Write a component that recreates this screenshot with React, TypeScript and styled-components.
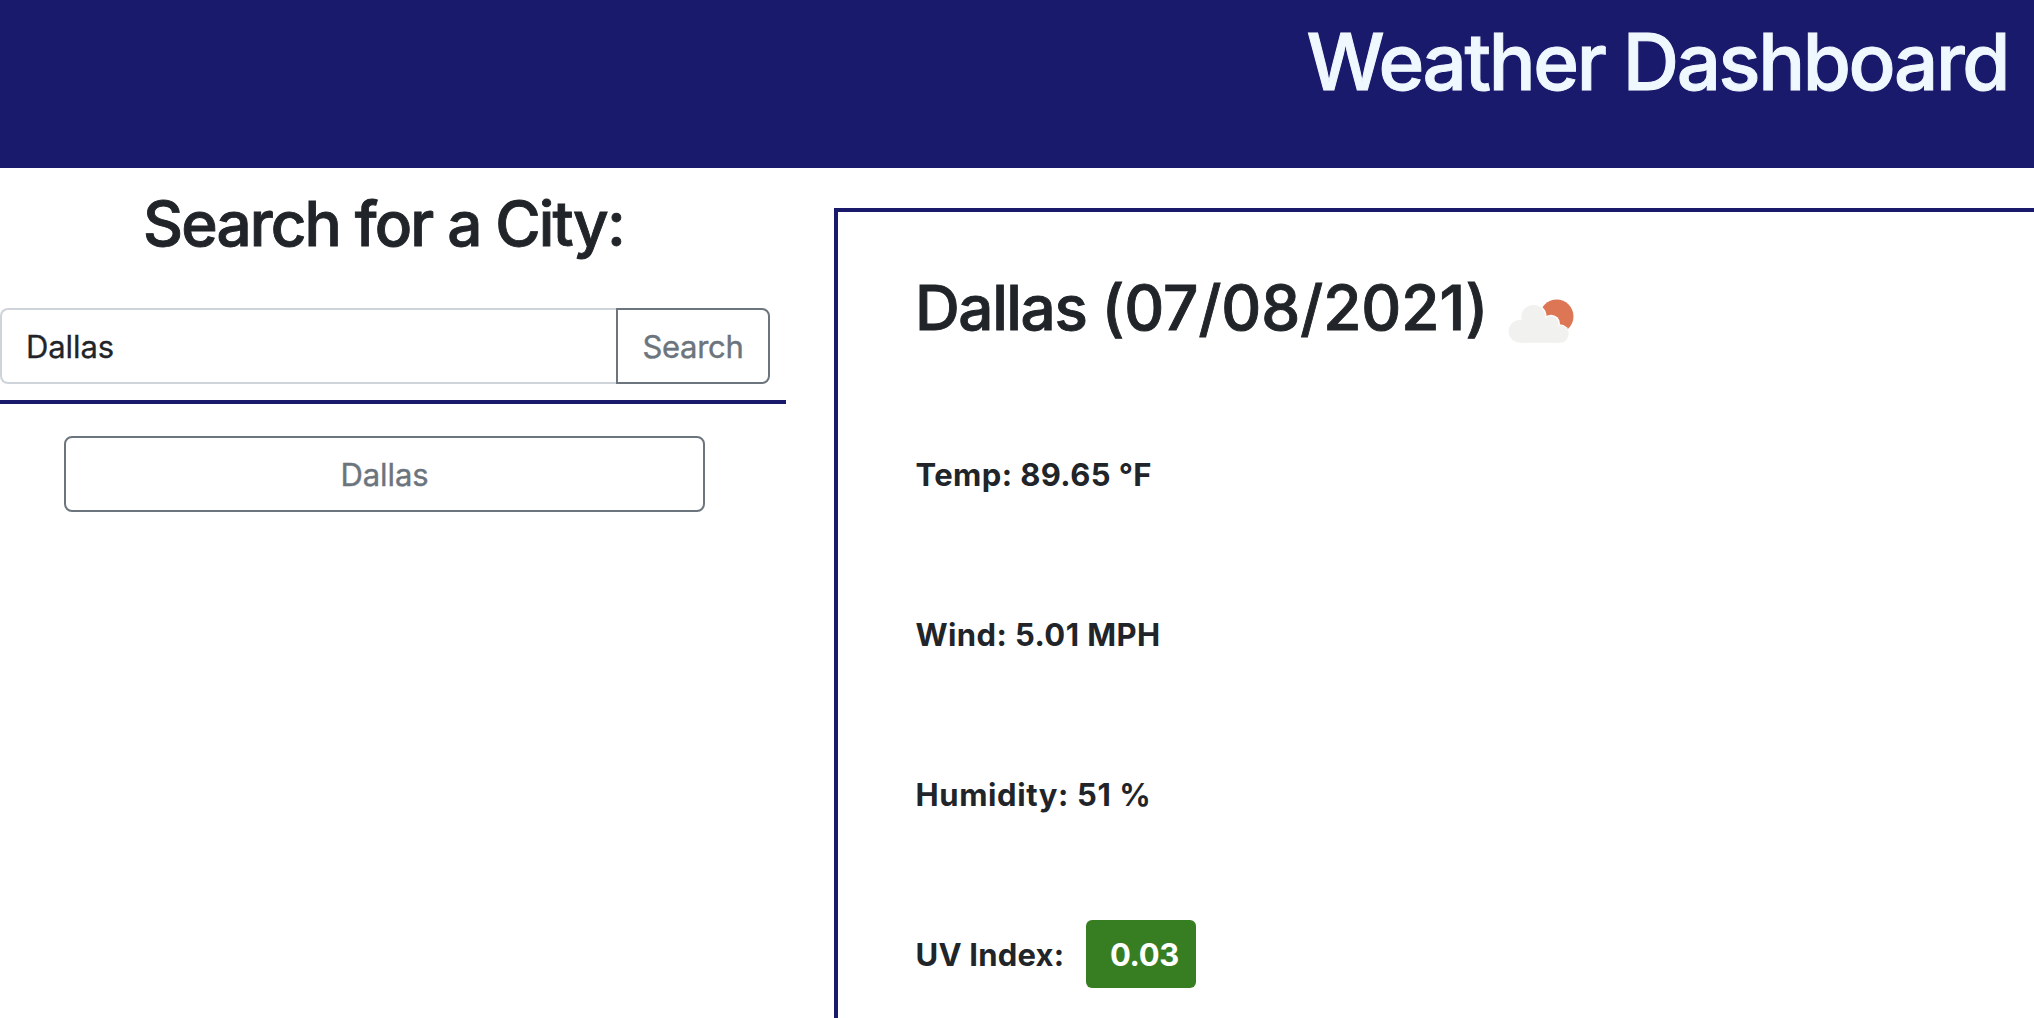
import React, { useState } from "react";
import styled, { createGlobalStyle } from "styled-components";

const navy = "#191a6b";
const ink = "#212529";
const muted = "#6c757d";

const GlobalStyle = createGlobalStyle`
  *, *::before, *::after { box-sizing: border-box; }
  html, body { margin: 0; height: 100%; overflow: hidden; background: #fff; }
  body {
    font-family: Inter, "Liberation Sans", sans-serif;
    font-size: 31px;
    line-height: 48px;
    color: ${ink};
  }
`;

const Page = styled.div`
  display: flex;
  flex-direction: column;
  height: 1018px;
  overflow: hidden;
`;

const Header = styled.header`
  flex: none;
  display: flex;
  justify-content: flex-end;
  height: 168px;
  padding: 14px 26px 0 0;
  background: ${navy};
`;

const Title = styled.h1<{ $spacing: number }>`
  margin: 0;
  font-size: 78px;
  font-weight: 500;
  line-height: 96px;
  letter-spacing: ${(p) => p.$spacing}px;
  -webkit-text-stroke: 1px aliceblue;
  color: aliceblue;
`;

const Main = styled.main`
  flex: 1;
  display: flex;
  align-items: stretch;
  gap: 48px;
  min-height: 0;
`;

const Sidebar = styled.aside`
  flex: none;
  width: 786px;
  padding-top: 17px;
`;

const Heading = styled.h2<{ $spacing: number }>`
  margin: 0;
  font-size: 62px;
  font-weight: 500;
  line-height: 77px;
  letter-spacing: ${(p) => p.$spacing}px;
  -webkit-text-stroke: 0.9px ${ink};
  white-space: nowrap;
`;

const SearchTitle = styled(Heading)`
  padding-left: 143px;
`;

const SearchForm = styled.form`
  display: flex;
  width: 770px;
  height: 76px;
  margin-top: 46px;
`;

const CityInput = styled.input`
  flex: 1;
  min-width: 0;
  padding: 1px 24px 0;
  border: 2px solid #ced4da;
  border-right: 0;
  border-radius: 8px 0 0 8px;
  background: #fff;
  color: ${ink};
  font: inherit;
  letter-spacing: -0.1px;
  -webkit-text-stroke: 0.3px ${ink};
  outline: none;
`;

const OutlineButton = styled.button`
  padding: 1px 0 0;
  border: 2px solid ${muted};
  border-radius: 8px;
  background: #fff;
  color: ${muted};
  font: inherit;
  letter-spacing: -0.3px;
  -webkit-text-stroke: 0.4px ${muted};
`;

const SearchButton = styled(OutlineButton)`
  width: 154px;
  border-radius: 0 8px 8px 0;
`;

const HistoryList = styled.div`
  display: flex;
  flex-direction: column;
  margin-top: 16px;
  padding: 32px 81px 0 64px;
  border-top: 4px solid ${navy};
`;

const HistoryButton = styled(OutlineButton)`
  height: 76px;
  letter-spacing: -0.1px;
`;

const Panel = styled.section`
  flex: 1;
  margin-top: 40px;
  padding: 57px 0 0 77px;
  border: solid ${navy};
  border-width: 4px 0 0 4px;
`;

const CityRow = styled.div`
  display: flex;
  height: 77px;
`;

const CityName = styled(Heading)`
  width: 592.5px;
`;

const CityDate = styled.span`
  letter-spacing: -0.05px;
`;

const WeatherIcon = styled.svg`
  width: 66px;
  height: 46px;
  margin-top: 30px;
`;

const Readings = styled.div`
  display: flex;
  flex-direction: column;
  gap: 92px;
  margin-top: 94px;
  padding-left: 0.5px;
`;

const Reading = styled.div<{ $spacing: number }>`
  display: flex;
  align-items: center;
  height: 68px;
  padding-top: 1px;
  font-weight: 700;
  letter-spacing: ${(p) => p.$spacing}px;
  white-space: pre;
`;

const UvLabel = styled.span`
  width: 170.5px;
`;

const UvBadge = styled.span`
  height: 68px;
  width: 110px;
  margin-top: -1px;
  padding-left: 24px;
  border-radius: 6px;
  background: #377e22;
  color: #fff;
  line-height: 69px;
  letter-spacing: -0.4px;
`;

function BrokenClouds() {
  return (
    <WeatherIcon viewBox="82 58 198 138">
      <circle cx="228" cy="110" r="50.5" fill="#dc7655" />
      <g fill="#fff">
        <circle cx="158" cy="112" r="40" />
        <circle cx="211" cy="132" r="27" />
        <circle cx="237" cy="164" r="30" />
      </g>
      <g fill="#f1f1ef">
        <circle cx="118" cy="155" r="34" />
        <circle cx="158" cy="112" r="36" />
        <circle cx="211" cy="132" r="23" />
        <circle cx="238" cy="163" r="26" />
        <path d="M118 120H200L238 150V189H118Z" />
      </g>
    </WeatherIcon>
  );
}

const readings = [
  { text: "Temp: 89.65 °F", spacing: 0.4 },
  { text: "Wind: 5.01 MPH", spacing: 0.4 },
  { text: "Humidity: 51 %", spacing: 0.6 },
];

export default function App() {
  const [city, setCity] = useState("Dallas");
  return (
    <Page>
      <GlobalStyle />
      <Header>
        <Title $spacing={-2.4}>Weather Dashboard</Title>
      </Header>
      <Main>
        <Sidebar>
          <SearchTitle $spacing={-1.85}>Search for a City:</SearchTitle>
          <SearchForm onSubmit={(e) => e.preventDefault()}>
            <CityInput value={city} onChange={(e) => setCity(e.target.value)} />
            <SearchButton>Search</SearchButton>
          </SearchForm>
          <HistoryList>
            <HistoryButton>Dallas</HistoryButton>
          </HistoryList>
        </Sidebar>
        <Panel>
          <CityRow>
            <CityName $spacing={-1.4}>
              Dallas <CityDate>(07/08/2021)</CityDate>
            </CityName>
            <BrokenClouds />
          </CityRow>
          <Readings>
            {readings.map((r) => (
              <Reading key={r.text} $spacing={r.spacing}>
                {r.text}
              </Reading>
            ))}
            <Reading $spacing={0.2}>
              <UvLabel>UV Index:</UvLabel>
              <UvBadge>0.03</UvBadge>
            </Reading>
          </Readings>
        </Panel>
      </Main>
    </Page>
  );
}
